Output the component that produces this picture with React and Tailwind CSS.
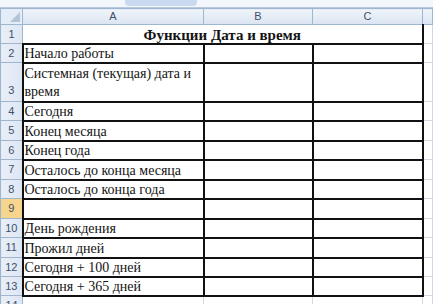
import React from "react";

const rows = [
  { n: 2, label: "Начало работы" },
  { n: 3, label: "Системная (текущая) дата и время", tall: true },
  { n: 4, label: "Сегодня" },
  { n: 5, label: "Конец месяца", extra: true },
  { n: 6, label: "Конец года" },
  { n: 7, label: "Осталось до конца месяца", extra: true },
  { n: 8, label: "Осталось до конца года" },
  { n: 9, label: "", active: true, extra: true },
  { n: 10, label: "День рождения" },
  { n: 11, label: "Прожил дней", extra: true },
  { n: 12, label: "Сегодня + 100 дней" },
  { n: 13, label: "Сегодня + 365 дней" },
];

const RowHead = ({ n, active, tall, extra }) => (
  <td
    className={`${tall ? "h-[39px] pt-[16px]" : extra ? "h-[20px]" : "h-[19px]"} p-0 border border-[#9eb6ce] text-center align-middle text-[11px] leading-none text-[#3e5069] [font-family:Liberation_Sans,Arial,sans-serif] ${
      active ? "bg-[#f8d58d]" : "bg-gradient-to-r from-[#e9eff8] to-[#dde6f3]"
    }`}
  >
    {n}
  </td>
);

export default function App() {
  return (
    <div className="w-[433px] h-[304px] overflow-hidden bg-white [font-family:Liberation_Sans,Arial,sans-serif]">
      {/* strip from the formula bar */}
      <div className="h-[8px] bg-[#f3f6fb] border-b border-[#b8c8dc] flex">
        <div className="w-[125px]" />
        <div className="w-[72px] h-[6px] rounded-b-sm bg-[#c9daf0]" />
      </div>
      <table className="table-fixed border-collapse w-[433px]">
        <colgroup>
          <col className="w-[22px]" />
          <col className="w-[181px]" />
          <col className="w-[109px]" />
          <col className="w-[110px]" />
          <col />
        </colgroup>
        <thead>
          <tr>
            <th className="relative h-[16px] p-0 border border-[#9eb6ce] bg-[#e4ecf7]">
              <span className="absolute right-[2px] bottom-[2px] w-0 h-0 border-l-[10px] border-l-transparent border-b-[10px] border-b-[#b4c4d8]" />
            </th>
            {["A", "B", "C", ""].map((c, i) => (
              <th
                key={i}
                className="h-[16px] p-0 border border-[#9eb6ce] bg-gradient-to-b from-[#f0f4fa] to-[#dae4f1] text-[11px] leading-none font-normal text-[#3e5069] text-center"
              >
                {c}
              </th>
            ))}
          </tr>
        </thead>
        <tbody className="[font-family:Liberation_Serif,Times_New_Roman,serif] text-[14px] text-[#141414]">
          <tr>
            <RowHead n={1} />
            <td
              colSpan={3}
              className="p-0 border-b-2 border-r-2 border-b-[#111] border-r-[#111] border-t border-t-[#d0d7e5] text-center align-bottom text-[15px] font-bold leading-[16px]"
            >
              Функции Дата и время
            </td>
            <td className="p-0 border border-[#d0d7e5]" />
          </tr>
          {rows.map((r) => (
            <tr key={r.n}>
              <RowHead n={r.n} active={r.active} tall={r.tall} extra={r.extra} />
              <td
                className={`border-2 border-[#111] align-bottom py-0 px-[1px] ${
                  r.tall ? "leading-[18px]" : "leading-[16px]"
                }`}
              >
                {r.label}
              </td>
              <td className="p-0 border-2 border-[#111]" />
              <td className="p-0 border-2 border-[#111]" />
              <td className="p-0 border border-[#d0d7e5]" />
            </tr>
          ))}
          <tr>
            <RowHead n={14} />
            <td className="p-0 border border-[#d0d7e5]" />
            <td className="p-0 border border-[#d0d7e5]" />
            <td className="p-0 border border-[#d0d7e5]" />
            <td className="p-0 border border-[#d0d7e5]" />
          </tr>
        </tbody>
      </table>
    </div>
  );
}
